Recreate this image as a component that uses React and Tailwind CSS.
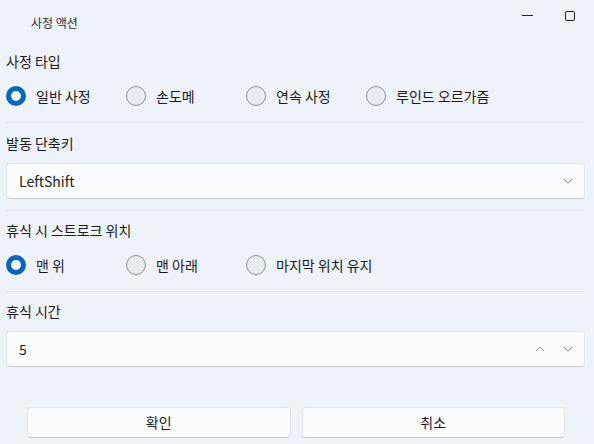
import React from "react";

const font = { fontFamily: '"Noto Sans CJK KR", "Noto Sans", sans-serif' };

function Radio({ label, checked }) {
  return (
    <div className="flex w-[120px] items-center gap-[10px]">
      {checked ? (
        <span className="box-border h-[20px] w-[20px] shrink-0 rounded-full border-[5px] border-[#0067c0] bg-white" />
      ) : (
        <span className="box-border h-[20px] w-[20px] shrink-0 rounded-full border border-[#8b8f95] bg-[#e9ecf1]" />
      )}
      <span className="whitespace-nowrap text-[14px] leading-[20px] text-[#1b1b1b]">{label}</span>
    </div>
  );
}

function ChevronDown() {
  return (
    <svg width="10" height="6" viewBox="0 0 10 6" fill="none">
      <path d="M1 1l4 4 4-4" stroke="#8a8a8a" strokeWidth="1" />
    </svg>
  );
}

function ChevronUp() {
  return (
    <svg width="10" height="6" viewBox="0 0 10 6" fill="none">
      <path d="M1 5l4-4 4 4" stroke="#8a8a8a" strokeWidth="1" />
    </svg>
  );
}

function Divider() {
  return <div className="h-px w-[578px] bg-[#e1e4e9]" />;
}

function Label({ children, h }) {
  return (
    <div className={`flex items-center text-[14px] text-[#1b1b1b] ${h}`}>{children}</div>
  );
}

export default function App() {
  return (
    <div style={font} className="h-[444px] w-[594px] overflow-hidden bg-[#eef2f9]">
      {/* title bar */}
      <div className="flex h-[46px] justify-between">
        <div className="flex items-center pl-[31px] text-[12px] text-[#333]">사정 액션</div>
        <div className="flex items-start gap-[32px] pr-[19px] pt-[11px]">
          <div className="mt-[4px] h-px w-[11px] bg-[#222]" />
          <div className="h-[10px] w-[10px] rounded-[2px] border border-[#222]" />
        </div>
      </div>

      <div className="pl-[6px]">
        <Label h="h-[30px]">사정 타입</Label>
        <div className="flex h-[40px] items-center">
          <Radio label="일반 사정" checked />
          <Radio label="손도메" />
          <Radio label="연속 사정" />
          <Radio label="루인드 오르가즘" />
        </div>
        <div className="mt-[6px]">
          <Divider />
        </div>

        <Label h="h-[40px]">발동 단축키</Label>
        <div className="flex h-[36px] w-[579px] items-center justify-between rounded-[4px] border border-[#e3e6ea] border-b-[#c8cbd0] bg-[#fbfcfd] pl-[12px] pr-[11px]">
          <span className="text-[14px] text-[#1b1b1b]">LeftShift</span>
          <ChevronDown />
        </div>
        <div className="mt-[11px]">
          <Divider />
        </div>

        <Label h="h-[38px]">휴식 시 스트로크 위치</Label>
        <div className="flex h-[32px] items-center">
          <Radio label="맨 위" checked />
          <Radio label="맨 아래" />
          <Radio label="마지막 위치 유지" />
        </div>
        <div className="mt-[10px]">
          <Divider />
        </div>

        <Label h="h-[39px]">휴식 시간</Label>
        <div className="flex h-[36px] w-[579px] items-center justify-between rounded-[4px] border border-[#e3e6ea] border-b-[#c8cbd0] bg-[#fbfcfd] pl-[12px] pr-[11px]">
          <span className="text-[14px] text-[#1b1b1b]">5</span>
          <div className="flex items-center gap-[18px]">
            <ChevronUp />
            <ChevronDown />
          </div>
        </div>
      </div>

      <div className="ml-[27px] mt-[40px] grid w-[538px] grid-cols-2 gap-[11px]">
        <button className="h-[31px] rounded-[4px] border border-[#e3e6ea] border-b-[#c8cbd0] bg-[#fbfcfd] text-[14px] text-[#1b1b1b]">
          확인
        </button>
        <button className="h-[31px] rounded-[4px] border border-[#e3e6ea] border-b-[#c8cbd0] bg-[#fbfcfd] text-[14px] text-[#1b1b1b]">
          취소
        </button>
      </div>
    </div>
  );
}
